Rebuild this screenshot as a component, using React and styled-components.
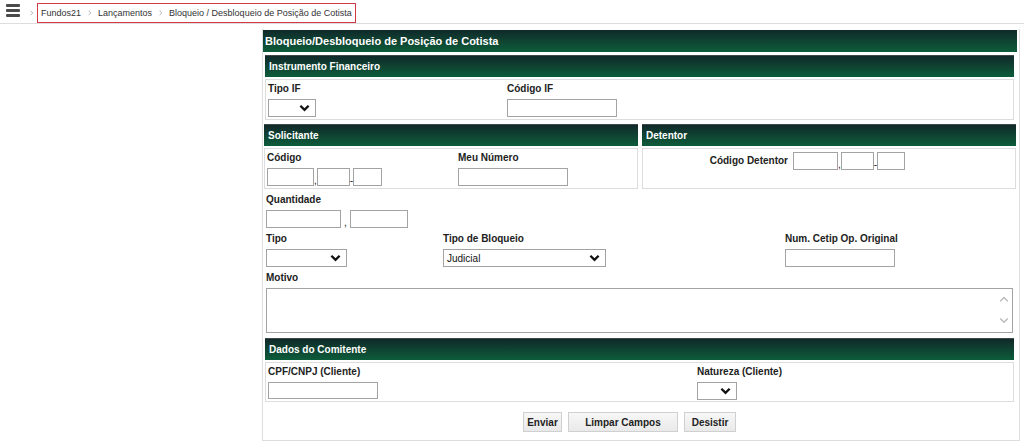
import React from 'react'
import styled, { createGlobalStyle } from 'styled-components'

const GlobalStyle = createGlobalStyle`
  body {
    margin: 0;
    background: #fff;
    font-family: "Liberation Sans", Arial, sans-serif;
    font-size: 11px;
    color: #222;
  }
`

const Chevron = ({ dir = 'right', color = '#999', size = 6, stroke = 1 }) => {
    const pts = {
        right: '2,1 5,4 2,7',
        down: '1,2 4,5 7,2',
        up: '1,5 4,2 7,5',
    }[dir]
    return (
        <svg width={size} height={size} viewBox="0 0 8 8">
            <polyline points={pts} fill="none" stroke={color} strokeWidth={stroke} />
        </svg>
    )
}

const App = () => {
    return (
        <>
            <GlobalStyle />
            <TopBar>
                <MenuIcon>
                    <span /><span /><span />
                </MenuIcon>
                <MenuSep><Chevron /></MenuSep>
                <Breadcrumb>
                    <Crumb>Fundos21</Crumb>
                    <CrumbSep><Chevron /></CrumbSep>
                    <Crumb>Lançamentos</Crumb>
                    <CrumbSep><Chevron /></CrumbSep>
                    <Crumb>Bloqueio / Desbloqueio de Posição de Cotista</Crumb>
                </Breadcrumb>
            </TopBar>

            <Page>
                <Panel>
                    <TitleBar>Bloqueio/Desbloqueio de Posição de Cotista</TitleBar>

                    <Section>
                        <SectionHeader>Instrumento Financeiro</SectionHeader>
                        <Box>
                            <FieldRow cols="239px 1fr">
                                <Field>
                                    <Label>Tipo IF</Label>
                                    <Select w={48} />
                                </Field>
                                <Field>
                                    <Label>Código IF</Label>
                                    <Input w={110} />
                                </Field>
                            </FieldRow>
                        </Box>
                    </Section>

                    <SplitRow>
                        <div>
                            <SectionHeader>Solicitante</SectionHeader>
                            <Box>
                                <FieldRow cols="191px 1fr">
                                    <Field>
                                        <Label>Código</Label>
                                        <Inline>
                                            <Input w={47} />
                                            <Sep>,</Sep>
                                            <Input w={33} />
                                            <Sep>-</Sep>
                                            <Input w={29} />
                                        </Inline>
                                    </Field>
                                    <Field>
                                        <Label>Meu Número</Label>
                                        <Input w={110} />
                                    </Field>
                                </FieldRow>
                            </Box>
                        </div>
                        <div>
                            <SectionHeader>Detentor</SectionHeader>
                            <Box>
                                <DetentorRow>
                                    <Label>Código Detentor</Label>
                                    <Inline>
                                        <Input w={45} />
                                        <Sep>,</Sep>
                                        <Input w={33} />
                                        <Sep>-</Sep>
                                        <Input w={28} />
                                    </Inline>
                                </DetentorRow>
                            </Box>
                        </div>
                    </SplitRow>

                    <FormArea>
                        <Field>
                            <Label>Quantidade</Label>
                            <Inline>
                                <Input w={75} />
                                <Sep wide>,</Sep>
                                <Input w={58} />
                            </Inline>
                        </Field>

                        <FieldRow cols="177px 342px 1fr">
                            <Field>
                                <Label>Tipo</Label>
                                <Select w={81} />
                            </Field>
                            <Field>
                                <Label>Tipo de Bloqueio</Label>
                                <Select w={163} value="Judicial" />
                            </Field>
                            <Field>
                                <Label>Num. Cetip Op. Original</Label>
                                <Input w={110} />
                            </Field>
                        </FieldRow>

                        <Field>
                            <Label>Motivo</Label>
                            <TextArea>
                                <ScrollArrows>
                                    <Chevron dir="up" color="#bbb" size={10} stroke={1.2} />
                                    <Chevron dir="down" color="#bbb" size={10} stroke={1.2} />
                                </ScrollArrows>
                            </TextArea>
                        </Field>
                    </FormArea>

                    <Section top={5}>
                        <SectionHeader>Dados do Comitente</SectionHeader>
                        <Box h={40}>
                            <FieldRow cols="429px 1fr">
                                <Field>
                                    <Label>CPF/CNPJ (Cliente)</Label>
                                    <Input w={110} h={17} />
                                </Field>
                                <Field>
                                    <Label>Natureza (Cliente)</Label>
                                    <Select w={40} />
                                </Field>
                            </FieldRow>
                        </Box>
                    </Section>

                    <Buttons>
                        <Button w={39}>Enviar</Button>
                        <Button w={110}>Limpar Campos</Button>
                        <Button w={52}>Desistir</Button>
                    </Buttons>
                </Panel>
            </Page>
        </>
    )
}

const Select = ({ w, value }) => (
    <SelectBox w={w}>
        <SelectValue>{value}</SelectValue>
        <Chevron dir="down" color="#111" size={11} stroke={1.7} />
    </SelectBox>
)

export default App

const TopBar = styled.div`
    display: flex;
    align-items: flex-start;
    height: 24px;
    padding: 3px 0 0 6px;
    box-sizing: border-box;
    border-bottom: 1px solid #ddd;
`

const MenuIcon = styled.div`
    display: flex;
    flex-direction: column;
    gap: 2px;
    width: 14px;
    margin-top: 1px;

    span {
        display: block;
        height: 3px;
        background: #4a4a4a;
        border-radius: 1px;
    }
`

const MenuSep = styled.span`
    display: flex;
    align-items: center;
    height: 20px;
    margin: 0 2px 0 9px;
`

const CrumbSep = styled.span`
    display: flex;
    align-items: center;
    margin: 0 5px 0 6px;
`

const Breadcrumb = styled.div`
    display: flex;
    align-items: center;
    height: 18px;
    padding: 0 3px;
    border: 1px solid #d23a48;
`

const Crumb = styled.span`
    color: #333;
    font-size: 9px;
`

const Page = styled.div`
    display: flex;
    padding: 5px 0 0 262px;
`

const Panel = styled.div`
    width: 758px;
    box-sizing: border-box;
    border: 1px solid #ddd;
    border-top: none;
    padding: 0 2px 8px 0;
`

const headerBg = `
    background: linear-gradient(to bottom, #10292a 0%, #0f4633 55%, #0c5c3b 100%);
    color: #fff;
    font-weight: bold;
`

const TitleBar = styled.div`
    ${headerBg}
    font-size: 11px;
    height: 22px;
    line-height: 22px;
    padding-left: 2px;
    margin-top: 1px;
`

const Section = styled.div`
    margin: ${({ top }) => top ?? 3}px 3px 0 2px;
`

const SectionHeader = styled.div`
    ${headerBg}
    font-size: 10px;
    height: 22px;
    line-height: 21px;
    padding-left: 4px;
    margin-bottom: 2px;
    border-top: 1px solid #3b4a47;
    box-sizing: border-box;
`

const Box = styled.div`
    height: ${({ h }) => h ?? 41}px;
    box-sizing: border-box;
    border: 1px solid #ddd;
    padding: 2px;
`

const SplitRow = styled.div`
    display: grid;
    grid-template-columns: 1fr 1fr;
    gap: 4px;
    margin: 4px 1px 0 1px;
`

const FieldRow = styled.div`
    display: grid;
    grid-template-columns: ${({ cols }) => cols};
`

const Field = styled.div`
    display: flex;
    flex-direction: column;
    align-items: flex-start;
`

const Label = styled.label`
    display: block;
    font-weight: bold;
    font-size: 10px;
    line-height: 14px;
    color: #222;
    margin-bottom: 3px;
    white-space: nowrap;
`

const DetentorRow = styled.div`
    display: flex;
    align-items: flex-start;
    gap: 5px;
    padding-top: 1px;

    ${Label} {
        width: 143px;
        text-align: right;
        margin: 2px 0 0;
    }
`

const Inline = styled.div`
    display: flex;
    align-items: flex-end;
`

const Sep = styled.span`
    font-size: 10px;
    line-height: 11px;
    color: #222;
    padding: 0 ${({ wide }) => (wide ? 3 : 0)}px;
`

const Input = styled.input`
    width: ${({ w }) => w}px;
    height: ${({ h }) => h ?? 18}px;
    box-sizing: border-box;
    border: 1px solid #a3a3a3;
    padding: 0 3px;
    margin: 0;
    font: 11px "Liberation Sans", Arial, sans-serif;
    background: #fff;
`

const SelectBox = styled.div`
    display: flex;
    align-items: center;
    justify-content: space-between;
    width: ${({ w }) => w}px;
    height: 18px;
    box-sizing: border-box;
    border: 1px solid #a3a3a3;
    padding: 0 5px 0 3px;
    background: #fff;
`

const SelectValue = styled.span`
    font-size: 10px;
    color: #111;
`

const FormArea = styled.div`
    display: flex;
    flex-direction: column;
    gap: 4px;
    margin: 4px 3px 0 3px;
`

const TextArea = styled.div`
    display: flex;
    justify-content: flex-end;
    width: 747px;
    height: 45px;
    box-sizing: border-box;
    border: 1px solid #a3a3a3;
    background: #fff;
`

const ScrollArrows = styled.div`
    display: flex;
    flex-direction: column;
    justify-content: space-between;
    padding: 6px 3px 6px 0;
`

const Buttons = styled.div`
    display: flex;
    gap: 6px;
    padding: 10px 0 0 260px;
`

const Button = styled.button`
    width: ${({ w }) => w}px;
    height: 20px;
    padding: 0;
    border: 1px solid #d0d0d0;
    background: linear-gradient(to bottom, #f7f7f7, #e9e9e9);
    font: bold 10px "Liberation Sans", Arial, sans-serif;
    color: #222;
`
